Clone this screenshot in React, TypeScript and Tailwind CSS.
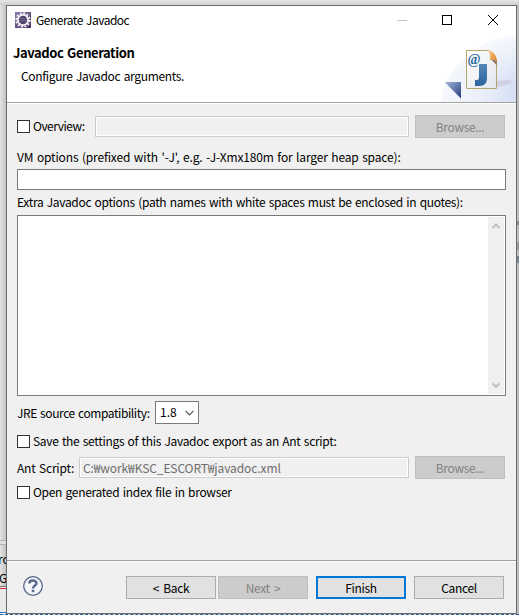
import React from "react";

function Check({ label, className = "" }: { label: string; className?: string }) {
  return (
    <label className="flex items-center">
      <span className="h-[13px] w-[13px] shrink-0 border border-[#333] bg-white" />
      <span className={`relative -top-px ml-[3px] whitespace-nowrap ${className}`}>{label}</span>
    </label>
  );
}

function Button({ children, kind = "normal" }: { children: React.ReactNode; kind?: "normal" | "disabled" | "primary" }) {
  const look = {
    normal: "border border-[#adadad] bg-[#e1e1e1] text-black",
    disabled: "border border-[#bfbfbf] bg-[#cccccc] text-[#838383]",
    primary: "border-2 border-[#0078d7] bg-[#e1e1e1] text-black",
  }[kind];
  return <button className={`flex h-[23px] w-[90px] shrink-0 items-center justify-center whitespace-pre tracking-[-0.35px] [word-spacing:2px] ${look}`}>{children}</button>;
}

function DisabledField({ children }: { children?: React.ReactNode }) {
  return (
    <div className="h-[21px] flex-1 border border-[#cccccc] bg-white p-px">
      <div className="flex h-full items-center bg-[#f0f0f0] pl-[2px] tracking-[-0.1px] text-[#6d6d6d]">{children}</div>
    </div>
  );
}

function Chevron({ up = false }: { up?: boolean }) {
  return (
    <svg width="16" height="17" viewBox="0 0 16 17" fill="none" stroke="#bfbfbf" strokeWidth="2">
      <path d={up ? "M4.5 11 8 7.5 11.5 11" : "M4.5 6.5 8 10 11.5 6.5"} />
    </svg>
  );
}

function EclipseIcon() {
  return (
    <svg width="16" height="16" viewBox="0 0 16 16">
      <defs>
        <linearGradient id="ecl" x1="0" y1="0" x2="1" y2="1">
          <stop offset="0" stopColor="#8a7ba6" />
          <stop offset="1" stopColor="#42315f" />
        </linearGradient>
      </defs>
      <rect width="16" height="16" fill="url(#ecl)" />
      <circle cx="8" cy="8" r="6.800" fill="none" stroke="#f2eff5" strokeWidth="1.800" strokeDasharray="2 1.56" />
      <circle cx="8" cy="8" r="5.200" fill="#51436e" stroke="#f2eff5" strokeWidth="1.900" />
      <path d="M4 6.500h8M4 8.500h8" stroke="#77698f" strokeWidth=".9" />
    </svg>
  );
}

function Banner() {
  return (
    <svg width="76" height="68" viewBox="440 34 76 68">
      <defs>
        <linearGradient id="sky" x1="0" y1="0" x2="1" y2="0">
          <stop offset="0" stopColor="#f6f8fd" />
          <stop offset=".5" stopColor="#ecf0fa" />
          <stop offset="1" stopColor="#d6dff4" />
        </linearGradient>
        <linearGradient id="skytop" x1="0" y1="0" x2="0" y2="1">
          <stop offset="0" stopColor="#fff" stopOpacity=".8" />
          <stop offset=".7" stopColor="#fff" stopOpacity="0" />
        </linearGradient>
        <linearGradient id="tri" x1="0" y1="0" x2="1" y2="1">
          <stop offset="0" stopColor="#a9b9dc" />
          <stop offset="1" stopColor="#1e3c7c" />
        </linearGradient>
        <linearGradient id="jay" x1="0" y1="0" x2="0" y2="1">
          <stop offset="0" stopColor="#5485b5" />
          <stop offset="1" stopColor="#2c659d" />
        </linearGradient>
        <linearGradient id="sheet" x1="0" y1="0" x2="1" y2="1">
          <stop offset="0" stopColor="#fff" />
          <stop offset="1" stopColor="#e4e6ee" />
        </linearGradient>
        <linearGradient id="fold" x1="0" y1="0" x2="1" y2="1">
          <stop offset="0" stopColor="#f9cf96" />
          <stop offset="1" stopColor="#d97a1c" />
        </linearGradient>
      </defs>
      <path d="M441 102C444 70 475 40 516 35V102Z" fill="url(#sky)" />
      <path d="M441 102C444 70 475 40 516 35V102Z" fill="url(#skytop)" />
      <path d="M444.500 82H461V98.500Z" fill="url(#tri)" />
      <ellipse cx="500" cy="83.500" rx="12" ry="3" fill="#d0d1e6" transform="rotate(-10 500 83.500)" />
      <path d="M466.500 50.500H489L496.500 60V88.500H466.500Z" fill="url(#sheet)" stroke="#b5a669" />
      <path d="M487.500 50.500C492 50 497 54.500 497 62C494.500 59 492.500 59 489.500 60.500C491 56 490 53 487.500 50.500Z" fill="url(#fold)" />
      <path d="M491.500 60L497 65.500V62C494.500 59 493 59 491.500 60Z" fill="#9a7a62" />
      <text x="467.500" y="63.500" fontFamily="'Liberation Serif', serif" fontWeight="bold" fontSize="14" fill="#2a6a9f">@</text>
      <path d="M479 64H487V78.500Q487 86 479 86H475V80H477Q479 80 479 77.500Z" fill="url(#jay)" />
    </svg>
  );
}

export default function App() {
  return (
    <div className="relative h-[615px] w-[519px] overflow-hidden bg-[#dedede] font-['Noto_Sans_CJK_KR','Noto_Sans',sans-serif] text-[12px] leading-4 text-black [word-spacing:1px]">
      <div className="absolute left-0 top-0 h-full w-[7px] bg-linear-to-r from-[#e4e4e4] to-[#bdbdbd]" />
      <div className="absolute right-0 top-0 h-full w-[3px] bg-[#bdbdbd]" />
      <div className="absolute left-0 top-0 h-[5px] w-full bg-linear-to-b from-[#e4e4e4] to-[#cfcfcf]" />
      <div className="absolute left-0 top-[540px] h-[5px] w-[7px] border-y border-[#b4b4b4] bg-[#dedede]" />
      <div className="absolute left-0 top-[586px] h-7 w-[7px] border-t border-[#777] bg-[#e9e9e9]" />
      <div className="absolute left-[-2px] top-[551px]">ro</div>
      <div className="absolute left-[-1px] top-[570px]">G</div>
      <div className="absolute left-0 top-[588px] w-[6px] border-t border-dashed border-[#e02020]" />
      <div className="absolute left-0 top-[612px] w-[6px] border-t border-dashed border-[#2476c8]" />
      <div className="absolute left-0 top-[614px] w-full border-t border-dashed border-[#245f9e]" />
      <div className="absolute left-[517px] top-[221px] h-[4px] w-[2px] bg-[#7f8b99]" />
      <div className="absolute left-[517px] top-[242px] h-[8px] w-[2px] bg-[#999]" />
      <div className="absolute left-[517px] top-[256px] h-[7px] w-[2px] bg-[#788392]" />

      <div className="absolute left-[6px] top-[5px] flex h-[609px] w-[511px] flex-col border border-[#6b6b6b] bg-[#f0f0f0]">
        <div className="flex h-7 shrink-0 items-center bg-white pl-2">
          <EclipseIcon />
          <span className="ml-[5px] flex-1 whitespace-nowrap tracking-[-0.5px]">Generate Javadoc</span>
          <svg width="120" height="28" viewBox="396 6 120 28" fill="none" shapeRendering="crispEdges">
            <path d="M397 20.500h10" stroke="#c4c4c4" />
            <path d="M442.500 15.500h9v9h-9z" stroke="#000" />
            <path d="M488 15l10 10M498 15l-10 10" stroke="#000" shapeRendering="auto" />
          </svg>
        </div>
        <div className="flex h-[68px] shrink-0 justify-between bg-white">
          <div className="pl-[6px] pt-[11px]">
            <h1 className="whitespace-nowrap text-[13px] leading-4 font-bold tracking-[-0.4px]">Javadoc Generation</h1>
            <p className="ml-2 mt-[7px] whitespace-nowrap tracking-[-0.34px]">Configure Javadoc arguments.</p>
          </div>
          <Banner />
        </div>
        <div className="h-[2px] shrink-0 border-b border-white bg-[#a0a0a0]" />

        <div className="flex flex-1 flex-col pl-[10px] pr-[10px] pt-[11px]">
          <div className="flex h-[23px] items-center pr-px">
            <div className="w-[78px] shrink-0"><Check label="Overview:" className="tracking-[-0.5px]" /></div>
            <DisabledField />
            <div className="ml-[6px]"><Button kind="disabled">Browse...</Button></div>
          </div>
          <div className="mt-[11px] flex h-4"><span className="whitespace-nowrap tracking-[-0.15px]">VM options (prefixed with '-J', e.g. -J-Xmx180m for larger heap space):</span></div>
          <div className="mt-1 h-[21px] border border-[#7a7a7a] bg-white" />
          <div className="mt-[4px] flex h-4"><span className="whitespace-nowrap tracking-[-0.32px]">Extra Javadoc options (path names with white spaces must be enclosed in quotes):</span></div>
          <div className="mt-[5px] flex h-[181px] justify-end border border-[#7a7a7a] bg-white p-px">
            <div className="flex w-4 flex-col justify-between bg-[#f0f0f0]"><Chevron up /><Chevron /></div>
          </div>
          <div className="mt-[5px] flex h-[23px] items-center">
            <span className="w-[138px] whitespace-nowrap tracking-[-0.42px]">JRE source compatibility:</span>
            <div className="flex h-[23px] w-11 items-center justify-between border border-[#7a7a7a] bg-white pl-1 pr-1">
              <span className="mt-[-2px]">1.8</span>
              <svg width="9" height="6" viewBox="0 0 9 6" fill="none" stroke="#555" strokeWidth="1.200"><path d="M.5.8l4 4 4-4" /></svg>
            </div>
          </div>
          <div className="mt-[9px] flex h-[17px] items-center"><Check label="Save the settings of this Javadoc export as an Ant script:" className="tracking-[-0.31px]" /></div>
          <div className="mt-[6px] flex h-[23px] items-center pr-px">
            <span className="w-[62px] shrink-0 whitespace-nowrap tracking-[-0.2px]">Ant Script:</span>
            <DisabledField>C:₩work₩KSC_ESCORT₩javadoc.xml</DisabledField>
            <div className="ml-[6px]"><Button kind="disabled">Browse...</Button></div>
          </div>
          <div className="mt-[5px] flex h-[17px] items-center"><Check label="Open generated index file in browser" className="tracking-[-0.3px]" /></div>
        </div>

        <div className="h-[2px] shrink-0 border-b border-white bg-[#a0a0a0]" />
        <div className="flex h-[51px] shrink-0 items-start pl-4 pr-3 pt-[14px]">
          <svg width="20" height="20" viewBox="0 0 20 20" fill="none" stroke="#56678a">
            <circle cx="10" cy="10" r="9.300" fill="#f4f6fa" strokeWidth="1.300" />
            <path d="M6.300 7.500C6.300 3.600 13.500 3.600 13.500 7.200C13.500 9.500 10 9.500 10 12.500" strokeWidth="2.400" />
            <path d="M10 13.800V16.200" strokeWidth="2.600" />
          </svg>
          <div className="ml-auto flex">
            <Button>{"< Back"}</Button>
            <div className="ml-[2px]"><Button kind="disabled">{"Next >"}</Button></div>
            <div className="ml-2"><Button kind="primary">Finish</Button></div>
            <div className="ml-2"><Button>Cancel</Button></div>
          </div>
        </div>
      </div>
    </div>
  );
}
